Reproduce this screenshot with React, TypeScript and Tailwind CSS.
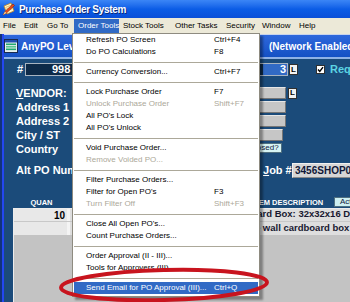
import React from 'react';

type MenuEntry = { label: string; keys?: string; disabled?: boolean; active?: boolean } | null;

const menuBar = [
  { label: 'File', w: 'w-[22px]', pl: 'pl-[3px]' },
  { label: 'Edit', w: 'w-[23px]', pl: 'pl-[2px]' },
  { label: 'Go To', w: 'w-[29px]', pl: 'pl-[2px]' },
  { label: 'Order Tools', w: 'w-[45px]', pl: 'pl-[4px]', open: true },
  { label: 'Stock Tools', w: 'w-[52px]', pl: 'pl-[4px]' },
  { label: 'Other Tasks', w: 'w-[51px]', pl: 'pl-[4px]' },
  { label: 'Security', w: 'w-[36px]', pl: 'pl-[4px]' },
  { label: 'Window', w: 'w-[37px]', pl: 'pl-[4px]' },
  { label: 'Help', w: 'w-[35px]', pl: 'pl-[4px]' },
];

const orderTools: MenuEntry[] = [
  { label: 'Refresh PO Screen', keys: 'Ctrl+F4' },
  { label: 'Do PO Calculations', keys: 'F8' },
  null,
  { label: 'Currency Conversion...', keys: 'Ctrl+F7' },
  null,
  { label: 'Lock Purchase Order', keys: 'F7' },
  { label: 'Unlock Purchase Order', keys: 'Shift+F7', disabled: true },
  { label: "All PO's Lock" },
  { label: "All PO's Unlock" },
  null,
  { label: 'Void Purchase Order...' },
  { label: 'Remove Voided PO...', disabled: true },
  null,
  { label: 'Filter Purchase Orders...' },
  { label: "Filter for Open PO's", keys: 'F3' },
  { label: 'Turn Filter Off', keys: 'Shift+F3', disabled: true },
  null,
  { label: "Close All Open PO's..." },
  { label: 'Count Purchase Orders...' },
  null,
  { label: 'Order Approval (II - III)...' },
  { label: 'Tools for Approvers (III)' },
  null,
  { label: 'Send Email for PO Approval (III)...', keys: 'Ctrl+Q', active: true },
];

const AppIcon = () => (
  <svg width="14" height="14" viewBox="0 0 14 14" className="shrink-0">
    <path d="M2 4 L9 1 L12 9 L5 12 Z" fill="#fff6c8" stroke="#c08020" strokeWidth="0.8" />
    <path d="M3.5 5.5 L9 3.3 M4.2 7.2 L9.7 5 M4.9 8.9 L10.4 6.7" stroke="#e0a040" strokeWidth="0.7" />
    <path d="M1 13 L3 9.5 L11 2 L12.5 3.5 L4.5 11 Z" fill="#e84a1c" stroke="#8a2008" strokeWidth="0.6" />
    <path d="M1 13 L3 9.5 L4.5 11 Z" fill="#f0d090" />
  </svg>
);

const ChildIcon = () => (
  <svg width="14" height="14" viewBox="0 0 14 14" className="shrink-0">
    <rect x="0.5" y="0.5" width="13" height="13" fill="#e8f0f0" stroke="#1a2a50" />
    <rect x="1" y="1" width="12" height="2.5" fill="#2050b0" />
    <rect x="2" y="4.5" width="10" height="1.6" fill="#22a870" />
    <rect x="2" y="7" width="10" height="1.6" fill="#58c890" />
    <rect x="2" y="9.5" width="10" height="1.6" fill="#22a870" />
  </svg>
);

const LButton = () => (
  <div className="flex h-[11px] w-[9px] shrink-0 items-center justify-center border border-[#303030] bg-[#f2f2f2] text-[8px] font-bold leading-none text-black">
    L
  </div>
);

const grayBox = 'h-[12px] shrink-0 border border-t-[#e6e6e6] border-l-[#e6e6e6] border-r-[#767676] border-b-[#767676] bg-[#c6c6c6]';

function OrderToolsMenu() {
  return (
    <div className="absolute left-[72px] top-[33px] w-[188px] border border-[#8e8b80] bg-white pb-[2px] text-[8px] text-black shadow-[3px_3px_2px_rgba(0,0,0,0.35)]">
      {orderTools.map((item, i) =>
        item === null ? (
          <div key={i} className="flex h-[8px] items-center px-[1px]">
            <div className="h-px w-full bg-[#aca899]" />
          </div>
        ) : (
          <div
            key={i}
            className={
              item.active
                ? 'mx-[1px] flex h-[12px] items-center bg-[#316ac5] pl-[12px] text-white'
                : `flex h-[12px] items-center pl-[13px] ${item.disabled ? 'text-[#aca899]' : ''}`
            }
          >
            <span className="w-[128px] shrink-0 whitespace-nowrap">{item.label}</span>
            <span className="whitespace-nowrap">{item.keys}</span>
          </div>
        )
      )}
    </div>
  );
}

function Form() {
  const label = 'w-[64px] shrink-0 whitespace-nowrap text-[11px] font-bold leading-[14px] text-white';
  return (
    <div className="flex-1 overflow-hidden bg-[#1b4b7a]">
      {/* PO number row */}
      <div className="mt-[4px] flex h-[13px] items-center pl-[13px]">
        <span className="w-[8px] shrink-0 text-[11px] font-bold text-white">#</span>
        <div className="flex h-[13px] w-[263px] shrink-0 items-center border border-[#a8b4c0] bg-[#0d2a48] text-[11px] font-bold text-white">
          <span className="pl-[26px]">998</span>
          <span className="ml-auto flex h-[11px] w-[24px] items-center justify-end bg-[#316ac5] pr-[1px]">3</span>
        </div>
        <div className="ml-[1px] shrink-0">
          <LButton />
        </div>
        <div className="ml-[18px] flex h-[9px] w-[9px] shrink-0 items-center justify-center border border-[#303030] bg-white">
          <svg width="7" height="7" viewBox="0 0 7 7">
            <path d="M1 3.5 L2.8 5.5 L6 1.2" fill="none" stroke="#000" strokeWidth="1.4" />
          </svg>
        </div>
        <span className="ml-[5px] shrink-0 whitespace-nowrap text-[11px] font-bold text-[#5cd4e4]">Required</span>
      </div>

      {/* vendor block */}
      <div className="mt-[10px] flex flex-col pl-[12px]">
        <div className="flex h-[14px] items-center">
          <span className={label}>
            <span className="underline">V</span>ENDOR:
          </span>
          <div className={`${grayBox} w-[206px]`} />
          <div className="ml-[2px] shrink-0">
            <LButton />
          </div>
        </div>
        <div className="flex h-[14px] items-center">
          <span className={label}>Address 1</span>
          <div className={`${grayBox} w-[206px]`} />
        </div>
        <div className="flex h-[14px] items-center">
          <span className={label}>Address 2</span>
          <div className={`${grayBox} w-[206px]`} />
        </div>
        <div className="flex h-[14px] items-center">
          <span className={label}>City / ST</span>
          <div className={`${grayBox} w-[203px]`} />
        </div>
        <div className="flex h-[14px] items-start">
          <span className={label}>Country</span>
          <div className={`${grayBox} mt-[1px] w-[150px]`} />
          <div className="ml-[16px] mt-[1px] flex h-[10px] w-[36px] shrink-0 items-center justify-center border border-[#507080] bg-[#d6f4f4] text-[8px] leading-none text-[#102040]">
            Closed?
          </div>
        </div>
      </div>

      {/* alt po / job row */}
      <div className="mt-[7px] flex h-[15px] items-center pl-[12px]">
        <div className="flex w-[247px] shrink-0 items-center">
          <span className="shrink-0 whitespace-nowrap text-[11px] font-bold text-white">Alt PO Number:</span>
          <div className={`${grayBox} ml-[4px] w-[120px]`} />
        </div>
        <span className="w-[29px] shrink-0 whitespace-nowrap text-[11px] font-bold text-white">
          <span className="underline">J</span>ob #
        </span>
        <div className="flex h-[15px] w-[80px] shrink-0 items-center border border-[#8a8a8a] border-t-[#f0f0f0] border-l-[#f0f0f0] bg-[#d6d6d6] pl-[2px] text-[10px] font-bold whitespace-nowrap text-[#101838]">
          3456SHOP01
        </div>
      </div>

      {/* table header */}
      <div className="mt-[19px] flex h-[11px] items-center pl-[9px] text-[7.5px] font-bold text-white">
        <span className="w-[57px] shrink-0 text-center">QUAN</span>
        <span className="w-[182px] shrink-0 pl-[8px]">UNIT</span>
        <span className="w-[82px] shrink-0 whitespace-nowrap">ITEM DESCRIPTION</span>
        <div className="-mt-[2px] flex h-[10px] w-[50px] shrink-0 items-center border border-[#507080] bg-[#cdeff2] pl-[5px] text-[8px] font-normal whitespace-nowrap text-[#102040]">
          Actions
        </div>
      </div>

      {/* table */}
      <div className="ml-[9px] h-[94px] border-t border-l border-[#ececec] bg-[#c3c3c3]">
        <div className="flex h-[13px] border-b border-[#c8c8c8] bg-[#dedede]">
          <div className="flex w-[53px] shrink-0 items-center justify-end bg-[#e8e8e8] pr-[2px] text-[10px] font-bold text-black">10</div>
          <div className="w-[3px] shrink-0 bg-[#f4f4f4]" />
          <div className="w-[154px] shrink-0" />
          <div className="shrink-0 self-start whitespace-nowrap text-[9.5px] leading-[9px] font-bold text-[#181830]">
            Cardboard Box: 32x32x16 Double wall
          </div>
        </div>
        <div className="flex h-[13px] bg-[#dedede]">
          <div className="w-[53px] shrink-0 bg-[#e8e8e8]" />
          <div className="w-[3px] shrink-0 bg-[#f4f4f4]" />
          <div className="w-[158px] shrink-0" />
          <div className="shrink-0 self-center whitespace-nowrap text-[9.5px] font-bold text-[#181830]">
            Double wall cardboard box
          </div>
        </div>
      </div>
    </div>
  );
}

export default function App() {
  return (
    <div className="relative h-[302px] w-[350px] overflow-hidden bg-[#1b4b7a] font-['Liberation_Sans',Arial,sans-serif]">
      {/* window title bar */}
      <div className="flex h-[18px] items-center gap-[3px] bg-gradient-to-b from-[#3b86f6] via-[#0b5de6] to-[#0a4fd8] pl-[2px]">
        <AppIcon />
        <span className="text-[10px] font-bold tracking-[-0.3px] whitespace-nowrap text-white [text-shadow:1px_1px_0_#0a2a7a]">
          Purchase Order System
        </span>
      </div>

      {/* menu bar */}
      <div className="flex h-[16px] bg-[#ece9d8] text-[8px] text-black">
        {menuBar.map((m) => (
          <div
            key={m.label}
            className={`${m.w} ${m.pl} flex shrink-0 items-center whitespace-nowrap ${m.open ? 'my-[1px] bg-[#316ac5] text-white' : ''}`}
          >
            {m.label}
          </div>
        ))}
      </div>

      {/* MDI client */}
      <div className="flex h-[268px]">
        <div className="w-[2px] shrink-0 bg-[#12337a]" />
        <div className="w-[2px] shrink-0 bg-[#2447f0]" />
        <div className="flex min-w-0 flex-1 flex-col">
          <div className="h-[1px] bg-[#c8d4ec]" />
          <div className="flex h-[22px] items-center overflow-hidden bg-gradient-to-b from-[#2e68dc] to-[#1450c4]">
            <ChildIcon />
            <span className="ml-[3px] w-[248px] shrink-0 text-[10px] font-bold whitespace-nowrap text-white">AnyPO Level III Purchasing</span>
            <span className="shrink-0 text-[10px] font-bold whitespace-nowrap text-white">(Network Enabled)</span>
          </div>
          <div className="h-[2px] bg-[#8fb1e6]" />
          <Form />
        </div>
      </div>

      <OrderToolsMenu />

      <svg className="pointer-events-none absolute left-0 top-0" width="350" height="302">
        <ellipse cx="164" cy="285" rx="103" ry="15" fill="none" stroke="#c8141e" strokeWidth="4" transform="rotate(-1.5 164 285)" />
      </svg>
    </div>
  );
}
